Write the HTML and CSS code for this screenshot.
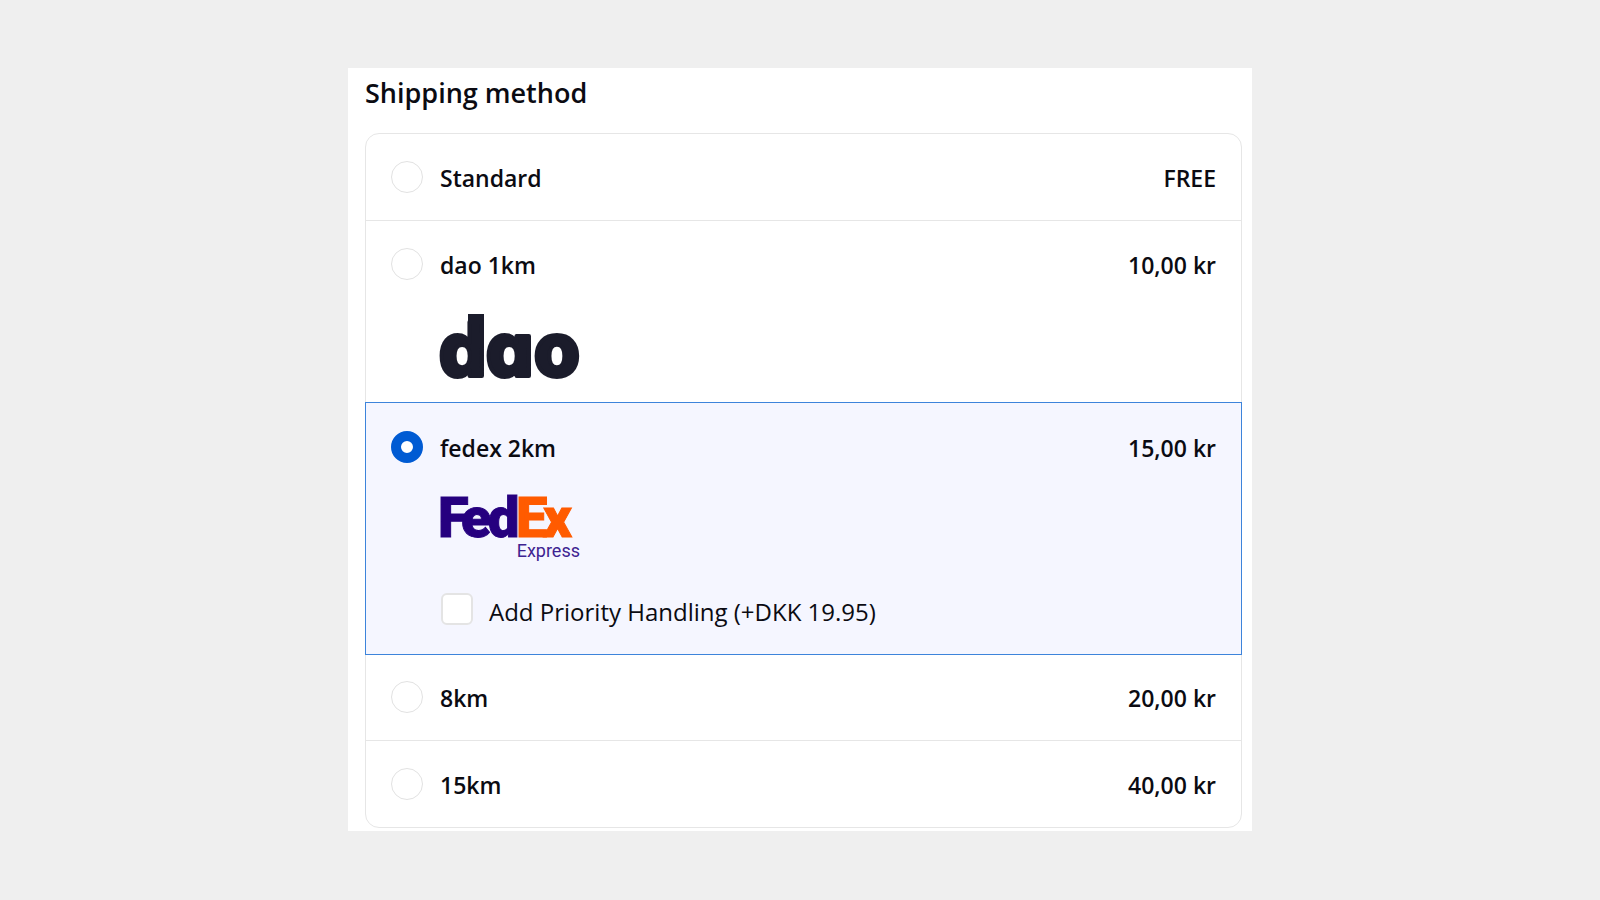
FILE: index.html
```html
<!DOCTYPE html>
<html lang="en">
<head>
    <meta charset="UTF-8">
    <meta name="viewport" content="width=device-width, initial-scale=1.0">
    <title>Shipping method</title>
    <link rel="stylesheet" href="styles.css">
</head>
<body>
    <form class="card">
        <h2 class="title">Shipping method</h2>
        <div class="methods">
            <div class="method">
                <input class="radio" type="radio" name="shipping" id="standard">
                <label class="name" for="standard">Standard</label>
                <span class="price">FREE</span>
            </div>
            <div class="method has-extra">
                <input class="radio" type="radio" name="shipping" id="dao">
                <label class="name" for="dao">dao 1km</label>
                <span class="price">10,00 kr</span>
                <div class="extra">
                    <svg class="logo" viewBox="0 0 140 65" role="img" aria-label="dao">
                        <rect class="dao-stem" x="28" y="0" width="16" height="20" />
                        <text class="dao-text" x="-1 46 94" y="62">dao</text>
                    </svg>
                </div>
            </div>
            <div class="method has-extra selected">
                <input class="radio" type="radio" name="shipping" id="fedex" checked>
                <label class="name" for="fedex">fedex 2km</label>
                <span class="price">15,00 kr</span>
                <div class="extra">
                    <svg class="logo" viewBox="0 0 140 65" role="img" aria-label="FedEx Express">
                        <text class="fedex-text" x="-2 21 48 76 103" y="40">Fed<tspan class="fedex-ex">Ex</tspan></text>
                        <text class="express-text" x="140" y="60">Express</text>
                    </svg>
                    <div class="option">
                        <input class="checkbox" type="checkbox" id="priority">
                        <label class="option-name" for="priority">Add Priority Handling (+DKK 19.95)</label>
                    </div>
                </div>
            </div>
            <div class="method">
                <input class="radio" type="radio" name="shipping" id="km8">
                <label class="name" for="km8">8km</label>
                <span class="price">20,00 kr</span>
            </div>
            <div class="method">
                <input class="radio" type="radio" name="shipping" id="km15">
                <label class="name" for="km15">15km</label>
                <span class="price">40,00 kr</span>
            </div>
        </div>
    </form>
</body>
</html>
```
FILE: styles.css
```css
* {
    box-sizing: border-box;
}

body {
    font-family: "Open Sans", "Noto Sans", sans-serif;
    font-size: 24px;
    line-height: 34px;
    color: #0b0b12;
    background-color: #efefef;
    margin: 0;
    padding-bottom: 2px;
    min-height: 100vh;
    display: flex;
    align-items: center;
    justify-content: center;
}

.card {
    background: #fff;
    width: 100%;
    max-width: 904px;
    padding: 8px 10px 3px 17px;
}

.title {
    font-size: 27px;
    font-weight: 600;
    line-height: 34px;
    margin: 0 0 23px;
}

.methods {
    border: 1px solid #e6e6e6;
    border-radius: 14px;
}

.method {
    display: grid;
    grid-template-columns: 32px 1fr auto;
    column-gap: 17px;
    padding: 27px 25px 25px;
}

.method + .method {
    border-top: 1px solid #e6e6e6;
}

.method.has-extra {
    padding-bottom: 23px;
}

.method.selected {
    background: #f5f6ff;
    border: 1px solid #3d84db;
    margin: 0 -1px -1px;
    padding-top: 28px;
}

.method.selected + .method {
    border-top: none;
}

.radio {
    appearance: none;
    width: 32px;
    height: 32px;
    margin: 0;
    border: 1px solid #e2e2e2;
    border-radius: 50%;
    background: #fff;
}

.radio:checked {
    border: 10px solid #005bd3;
}

.name, .price {
    font-size: 23px;
    font-weight: 600;
}

.extra {
    grid-column: 2 / 4;
    padding-top: 32px;
}

.logo {
    display: block;
    width: 140px;
    height: 65px;
    overflow: visible;
}

.dao-stem {
    fill: #1b1c2b;
}

.dao-text {
    font-family: Inter, sans-serif;
    font-size: 74px;
    font-weight: 800;
    font-feature-settings: "cv11";
    fill: #1b1c2b;
    stroke: #1b1c2b;
    stroke-width: 4px;
    stroke-linejoin: round;
}

.fedex-text {
    font-family: Roboto, sans-serif;
    font-size: 56px;
    font-weight: 900;
    fill: #26007f;
    stroke: #26007f;
    stroke-width: 1px;
}

.fedex-text .fedex-ex {
    fill: #ff5b00;
    stroke: #ff5b00;
}

.express-text {
    font-family: Roboto, sans-serif;
    font-size: 18px;
    text-anchor: end;
    fill: #3d2391;
}

.option {
    display: flex;
    gap: 16px;
    padding: 31px 0 2px;
}

.option-name {
    padding-top: 2px;
}

.checkbox {
    appearance: none;
    width: 32px;
    height: 32px;
    margin: 0 0 0 1px;
    border: 2px solid #e4e4e4;
    border-radius: 6px;
    background: #fff;
}

.checkbox:checked {
    background: #005bd3;
}
```
